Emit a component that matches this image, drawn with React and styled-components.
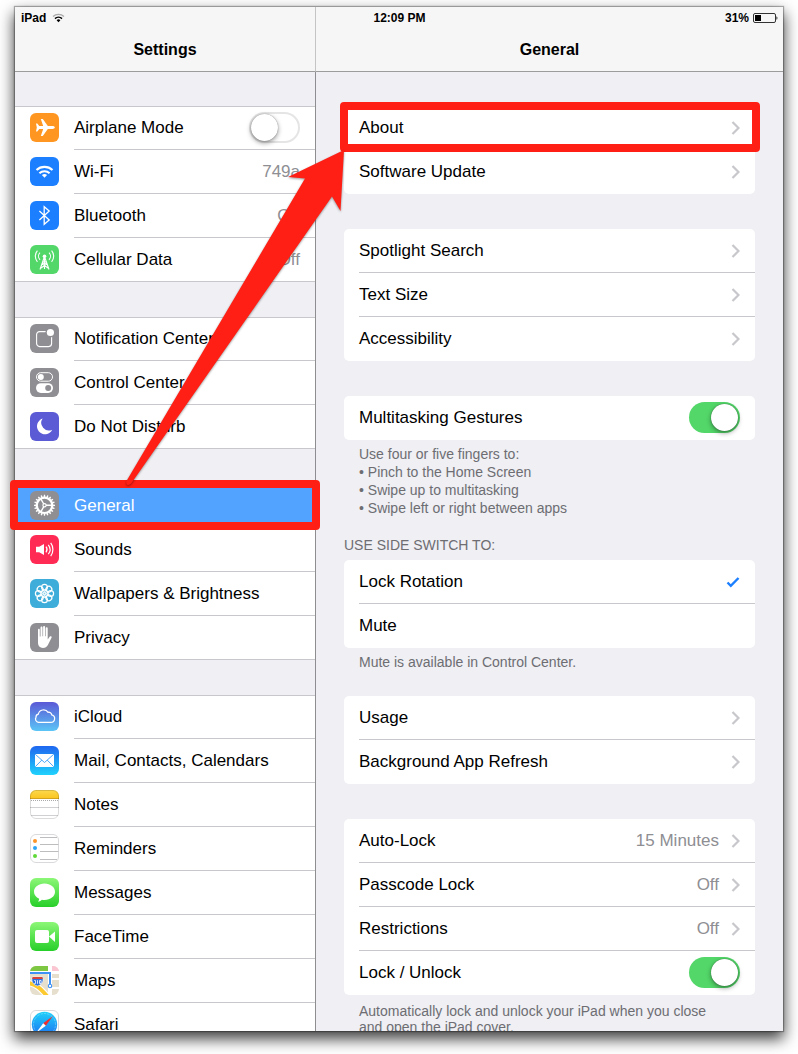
import React, { useState } from 'react';
import styled, { createGlobalStyle } from 'styled-components';

const GlobalStyle = createGlobalStyle`
  * {
    box-sizing: border-box;
  }
  body {
    margin: 0;
    background: #fff;
    font-family: 'Liberation Sans', Arial, sans-serif;
    font-size: 17px;
    color: #000;
  }
`;

const Page = styled.div`
  position: relative;
  height: 100vh;
  padding: 7px 15px 23px;
  overflow: hidden;
`;

const Window = styled.div`
  display: grid;
  grid-template-columns: 301px 1fr;
  grid-template-rows: 65px minmax(0, 1fr);
  height: 100%;
  background: #efeff4;
  box-shadow: 0 0 1px 1px rgba(0, 0, 0, 0.3), 0 7px 14px 1px rgba(0, 0, 0, 0.75);
`;

const StatusBar = styled.div`
  grid-area: 1 / 1 / 2 / 3;
  z-index: 1;
  display: grid;
  grid-template-columns: 1fr auto 1fr;
  align-items: center;
  height: 22px;
  padding: 0 5px 0 6px;
  font-size: 12px;
  font-weight: 700;
`;

const StatusSide = styled.div`
  display: flex;
  align-items: center;
  justify-content: ${(props) => (props.$end ? 'flex-end' : 'flex-start')};
  gap: ${(props) => (props.$end ? '4px' : '6px')};
`;

const NavBar = styled.header`
  grid-row: 1;
  grid-column: ${(props) => props.$column};
  display: flex;
  justify-content: center;
  padding-top: 33px;
  background: #f6f6f6;
  border-bottom: 1px solid #9c9c9c;
  border-right: ${(props) => (props.$divider ? '1px solid #c4c4c6' : 'none')};
`;

const Title = styled.h1`
  margin: 0;
  font-size: 16px;
  line-height: 20px;
  font-weight: 700;
`;

const Sidebar = styled.nav`
  padding-top: 34px;
  overflow: hidden;
  border-right: 1px solid #8e8e91;
`;

const Detail = styled.main`
  padding: 34px 28px 0;
  overflow: hidden;
`;

const SideGroup = styled.div`
  margin-bottom: 35px;
  background: #fff;
  box-shadow: inset 0 1px #c8c7cc, inset 0 -1px #c8c7cc;
`;

const SideRow = styled.a`
  display: flex;
  height: 44px;
  padding-left: 15px;
  gap: 15px;
  color: ${(props) => (props.$selected ? '#fff' : '#000')};
  background: ${(props) => (props.$selected ? '#52a2ff' : 'transparent')};
  text-decoration: none;

  > svg {
    flex: none;
    margin-top: 7px;
  }
`;

const RowBody = styled.span`
  flex: 1;
  display: flex;
  align-items: center;
  justify-content: space-between;
  padding-right: 15px;
  border-bottom: 1px solid #c8c7cc;

  ${SideRow}:last-child & {
    border-bottom-color: transparent;
  }
`;

const Value = styled.span`
  color: #8e8e93;
`;

const Group = styled.div`
  background: #fff;
  border-radius: 5px;
`;

const Section = styled.section`
  margin-bottom: ${(props) => (props.$noted ? '25px' : '35px')};
`;

const SectionHeader = styled.h2`
  margin: -6px 0 6px;
  font-size: 14px;
  line-height: 18px;
  font-weight: 400;
  color: #6d6d72;
`;

const Footnote = styled.p`
  margin: 0;
  padding: ${(props) => (props.$tight ? '8px' : '5px')} 28px 0 15px;
  font-size: 14px;
  line-height: ${(props) => (props.$tight ? '16px' : '18px')};
  white-space: pre-line;
  color: #6d6d72;
`;

const Row = styled.button`
  display: flex;
  width: 100%;
  height: 44px;
  padding: 0 0 0 15px;
  border: none;
  background: none;
  font: inherit;
  color: inherit;
  text-align: left;
`;

const RowInner = styled.span`
  flex: 1;
  display: flex;
  align-items: center;
  gap: 12px;
  height: 44px;
  padding-right: 15px;
  border-bottom: 1px solid #c8c7cc;

  ${Row}:last-child & {
    border-bottom-color: transparent;
  }
`;

const RowLabel = styled.span`
  flex: 1;
`;

const Switch = styled.input`
  appearance: none;
  flex: none;
  display: flex;
  width: 51px;
  height: 31px;
  margin: 0;
  padding: 2px;
  border-radius: 16px;
  background: #fff;
  box-shadow: inset 0 0 0 2px #e5e5e5;

  &::before {
    content: '';
    width: 27px;
    height: 27px;
    border-radius: 50%;
    background: #fff;
    box-shadow: 0 0 1px rgba(0, 0, 0, 0.5), 0 2px 5px rgba(0, 0, 0, 0.4);
  }

  &:checked {
    justify-content: flex-end;
    background: #53d769;
    box-shadow: none;
  }
`;

const Radio = styled.input`
  appearance: none;
  width: 0;
  height: 0;
  margin: 0;
`;

const Highlight = styled.div`
  position: absolute;
  top: ${(props) => props.$top};
  left: ${(props) => props.$left};
  right: ${(props) => props.$right};
  width: ${(props) => props.$width};
  height: 50px;
  border: 8px solid #ff1f14;
  border-radius: 4px;
  pointer-events: none;
`;

const Arrow = styled.svg`
  position: absolute;
  top: 0;
  left: 0;
  pointer-events: none;
  filter: drop-shadow(0 1px 1px rgba(0, 0, 0, 0.4));
`;

function Tile({ fill, children }) {
  return (
    <svg width="29" height="29" viewBox="0 0 29 29" fill="none" aria-hidden="true">
      <rect width="29" height="29" rx="6" fill={fill} />
      {children}
    </svg>
  );
}

function Gradient({ id, from, to }) {
  return (
    <linearGradient id={id} x1="0" y1="0" x2="0" y2="1">
      <stop offset="0" stopColor={from} />
      <stop offset="1" stopColor={to} />
    </linearGradient>
  );
}

const around = (count) => Array.from({ length: count }, (_, i) => (i * 360) / count);

const icons = {
  airplane: (
    <Tile fill="#ff9622">
      <path
        d="M24.8 14.5c0 .8-1.2 1.4-2.400 1.400h-4.600l-5 7h-2l2.400-7H9.300l-2 2.500H6l.8-3.900L6 10.600h1.300l2 2.500h3.900l-2.400-7h2l5 7h4.600c1.200 0 2.400.6 2.400 1.400z"
        fill="#fff"
      />
    </Tile>
  ),
  wifi: (
    <Tile fill="#1b7fff">
      <path d="M6.5 13.1a11.6 11.6 0 0 1 16 0" stroke="#fff" strokeWidth="2.1" />
      <path d="M9.4 16.2a7.4 7.4 0 0 1 10.2 0" stroke="#fff" strokeWidth="2" />
      <path d="M11.9 18.1a3.8 3.8 0 0 1 5.2 0l-2.6 2.6z" fill="#fff" />
    </Tile>
  ),
  bluetooth: (
    <Tile fill="#1b7fff">
      <path d="M9.4 10l9.8 9-5 4.3V5.7l5 4.3-9.8 9" stroke="#fff" strokeWidth="1.3" />
    </Tile>
  ),
  cellular: (
    <Tile fill="#53d769">
      <g stroke="#fff" strokeWidth="1.1">
        <path d="M7.4 5.6a8.6 8.6 0 0 0 0 11.2M10 7.6a5.2 5.2 0 0 0 0 7.2M19 7.6a5.2 5.2 0 0 1 0 7.2M21.6 5.6a8.6 8.6 0 0 1 0 11.2" />
        <path d="M14.5 11.5L10 24.5M14.5 11.5l4.5 13M14.5 13v11M12.8 16.5l4 2.5-5.8 4M16.2 16.5l-4 2.5 5.8 4" />
      </g>
      <circle cx="14.5" cy="11.2" r="1.8" fill="#fff" />
    </Tile>
  ),
  notification: (
    <Tile fill="#8e8e93">
      <rect x="6.6" y="7.6" width="15" height="15" rx="3" stroke="#fff" strokeWidth="1.1" />
      <circle cx="20.4" cy="8.5" r="5" fill="#8e8e93" />
      <circle cx="20.4" cy="8.5" r="3.6" fill="#fff" />
    </Tile>
  ),
  control: (
    <Tile fill="#8e8e93">
      <rect x="6.5" y="4.7" width="16" height="8.5" rx="4.2" stroke="#fff" strokeWidth="1" />
      <circle cx="10.8" cy="9" r="3" fill="#fff" />
      <rect x="6" y="15.2" width="17" height="9.7" rx="4.8" fill="#fff" />
      <circle cx="18.2" cy="20" r="3" fill="#8e8e93" />
    </Tile>
  ),
  moon: (
    <Tile fill="#5a5bd5">
      <path d="M12.6 6.6a8 8 0 1 0 9.6 11.1A7.6 7.6 0 0 1 12.6 6.6z" fill="#fff" />
    </Tile>
  ),
  gear: (
    <Tile fill="#8e8e93">
      <circle cx="14.5" cy="14.3" r="7.7" stroke="#fff" strokeWidth="2.200" />
      {around(20).map((a) => (
        <path key={a} d="M13.6 6l.3-2.200h1.200l.3 2.200z" fill="#fff" transform={`rotate(${a} 14.5 14.3)`} />
      ))}
      <circle cx="14.5" cy="14.3" r="1.6" stroke="#fff" strokeWidth="1.200" />
      <path d="M16 14.3h6M13.8 13l-3-5.2M13.8 15.6l-3 5.2" stroke="#fff" strokeWidth="1.400" />
    </Tile>
  ),
  sounds: (
    <Tile fill="#ff2b55">
      <path d="M6 11.8h3.2L14 8.900v11.200l-4.800-2.900H6z" fill="#fff" />
      <path
        d="M16 11.7a4.6 4.6 0 0 1 0 5.6M18.300 9.800a7.600 7.600 0 0 1 0 9.400M20.700 7.900a11 11 0 0 1 0 13.200"
        stroke="#fff"
        strokeWidth="1.200"
      />
    </Tile>
  ),
  wallpaper: (
    <Tile fill="#3fadd9">
      <g stroke="#fff" strokeWidth="1.200">
        {around(8).map((a) => (
          <g key={a} transform={`rotate(${a} 14.5 14.5)`}>
            <circle cx="14.5" cy="8.300" r="2.900" />
            <circle cx="14.5" cy="12.100" r="1.600" strokeWidth=".7" />
          </g>
        ))}
      </g>
    </Tile>
  ),
  privacy: (
    <Tile fill="#8e8e93">
      <path
        d="M8 19.5V6.800c0-1.500 1.800-1.500 1.800 0v6.700h.7V4.800c0-1.600 2-1.600 2 0v8.400h.6V4.100c0-1.600 2-1.600 2 0v9.100h.6V5.500c0-1.600 2-1.600 2 0v10.900l2.100-2.800c.9-1 2.400-.3 1.700 1.100l-3.600 7.400c-1.100 2-2.700 2.800-4.900 2.800-3.100 0-5-2-5-5.400z"
        fill="#fff"
      />
    </Tile>
  ),
  icloud: (
    <Tile fill="url(#cloudFill)">
      <Gradient id="cloudFill" from="#5a58d6" to="#5bc5f6" />
      <path
        d="M8.500 20.300h12.300a3.800 3.800 0 0 0 .9-7.500 3 3 0 0 0-3.600-2.500 5.400 5.400 0 0 0-9.800 1.900 3 3 0 0 0-2.300 3.200 3.200 3.200 0 0 0 2.500 4.900z"
        stroke="#fff"
        strokeWidth="1.200"
      />
    </Tile>
  ),
  mail: (
    <Tile fill="url(#mailFill)">
      <Gradient id="mailFill" from="#1f66f0" to="#1fd2fc" />
      <rect x="5" y="8" width="19" height="13" rx="1" fill="#fff" />
      <path d="M5.300 8.300l9.200 8.200 9.200-8.200M5.300 20.700l6.500-6.600M23.700 20.700l-6.500-6.600" stroke="#3a9df7" strokeWidth=".9" />
    </Tile>
  ),
  notes: (
    <Tile fill="#fff">
      <Gradient id="notesFill" from="#fcd84e" to="#fbc51f" />
      <path d="M0 8.500V6a6 6 0 0 1 6-6h17a6 6 0 0 1 6 6v2.500z" fill="url(#notesFill)" />
      <path d="M0 8.500h29" stroke="#d4a21c" />
      <path d="M1 10.500h27" stroke="#aaa" strokeDasharray="1 1" />
      <path d="M0 17.500h29M1 25.500h27" stroke="#d0d0d2" />
      <rect x=".5" y=".5" width="28" height="28" rx="5.500" stroke="#000" strokeOpacity=".14" />
    </Tile>
  ),
  reminders: (
    <Tile fill="#fff">
      <rect x=".5" y=".5" width="28" height="28" rx="5.500" stroke="#d9d9db" />
      <path d="M10 3.500h17M10 10.500h18.500M10 17.500h18.500M10 25.500h17" stroke="#bdbdbf" />
      <circle cx="5" cy="7" r="2" fill="#fc9427" />
      <circle cx="5" cy="14" r="2" fill="#2ea5f7" />
      <circle cx="5" cy="22" r="2" fill="#5fd938" />
    </Tile>
  ),
  messages: (
    <Tile fill="url(#greenFill)">
      <Gradient id="greenFill" from="#8cf777" to="#27cf2a" />
      <path
        d="M14.500 5.500c5.900 0 10.500 3.600 10.500 8.300s-4.600 8.200-10.500 8.200c-1 0-1.900-.1-2.700-.3-.9 1-2.300 1.700-3.800 1.900.8-.8 1.200-1.700 1.200-2.800C6 19.300 4 16.800 4 13.800c0-4.700 4.600-8.300 10.500-8.300z"
        fill="#fff"
      />
    </Tile>
  ),
  facetime: (
    <Tile fill="url(#videoFill)">
      <Gradient id="videoFill" from="#8cf777" to="#27cf2a" />
      <rect x="5" y="8" width="14" height="13" rx="2" fill="#fff" />
      <path d="M19 14.500l6-5v10.500z" fill="#fff" />
    </Tile>
  ),
  maps: (
    <svg width="29" height="29" viewBox="0 0 29 29" fill="none" aria-hidden="true">
      <clipPath id="mapClip">
        <rect width="29" height="29" rx="6" />
      </clipPath>
      <g clipPath="url(#mapClip)">
        <rect width="29" height="29" fill="#e6dfcd" />
        <path d="M0 0h18v5H0z" fill="#7dc742" />
        <path d="M22 0h7v5h-7z" fill="#fbc6d2" />
        <path d="M0 5h18v3H0zM18 0h4v29h-4zM22 5h7v3h-7zM22 12h7v2h-7zM22 21h7v2h-7z" fill="#fff" />
        <path d="M-2 17c8 1 13 6 19 13" stroke="#fff" strokeWidth="6" />
        <path d="M-2 17c8 1 13 6 19 13" stroke="#fcc92f" strokeWidth="4" />
        <path d="M0 7h20v12" stroke="#3f92f5" strokeWidth="2" />
        <circle cx="20" cy="20" r="1.700" fill="#fff" stroke="#3f92f5" strokeWidth="1.100" />
        <path d="M2.500 11h10c1 3 1 7-5 9-6-2-6-6-5-9z" fill="#2c73e0" stroke="#fff" strokeWidth=".5" />
        <path d="M2.200 13l.5-2h9.600l.5 2z" fill="#d9413b" />
        <path d="M4.200 14.500h1.300v3H4.200M7.500 14.200v3.600M9.500 14.500h1.600v3H9.500z" stroke="#fff" strokeWidth=".8" />
      </g>
    </svg>
  ),
  safari: (
    <Tile fill="#fff">
      <Gradient id="safariFill" from="#1fd0fa" to="#1d6ff1" />
      <rect x=".5" y=".5" width="28" height="28" rx="5.500" stroke="#d9d9db" />
      <circle cx="14.500" cy="14.500" r="12.700" fill="url(#safariFill)" />
      <circle cx="14.500" cy="14.500" r="11" stroke="#fff" strokeOpacity=".6" strokeDasharray=".5 1" />
      <path d="M23 6l-7.200 9.800-2.600-2.600z" fill="#f22d2d" />
      <path d="M6 23l7.200-9.800 2.600 2.600z" fill="#fff" />
    </Tile>
  ),
};

const Chevron = () => (
  <svg width="9" height="14" viewBox="0 0 9 14" fill="none" aria-hidden="true">
    <path d="M1.500 1l6 6-6 6" stroke="#c7c7cc" strokeWidth="2.200" />
  </svg>
);

const Check = () => (
  <svg width="14" height="12" viewBox="0 0 14 12" fill="none" aria-hidden="true">
    <path d="M1.500 6.500l3.300 3.300L12.500 2" stroke="#1b7fff" strokeWidth="2.400" />
  </svg>
);

const sideGroups = [
  [
    { icon: 'airplane', label: 'Airplane Mode', toggle: true },
    { icon: 'wifi', label: 'Wi-Fi', value: '749a' },
    { icon: 'bluetooth', label: 'Bluetooth', value: 'On' },
    { icon: 'cellular', label: 'Cellular Data', value: 'Off' },
  ],
  [
    { icon: 'notification', label: 'Notification Center' },
    { icon: 'control', label: 'Control Center' },
    { icon: 'moon', label: 'Do Not Disturb' },
  ],
  [
    { icon: 'gear', label: 'General', selected: true },
    { icon: 'sounds', label: 'Sounds' },
    { icon: 'wallpaper', label: 'Wallpapers & Brightness' },
    { icon: 'privacy', label: 'Privacy' },
  ],
  [
    { icon: 'icloud', label: 'iCloud' },
    { icon: 'mail', label: 'Mail, Contacts, Calendars' },
    { icon: 'notes', label: 'Notes' },
    { icon: 'reminders', label: 'Reminders' },
    { icon: 'messages', label: 'Messages' },
    { icon: 'facetime', label: 'FaceTime' },
    { icon: 'maps', label: 'Maps' },
    { icon: 'safari', label: 'Safari' },
  ],
];

function SideItem({ item }) {
  const [on, setOn] = useState(false);
  const link = item.toggle ? { as: 'label' } : { href: '#' };
  return (
    <SideRow {...link} $selected={item.selected}>
      {icons[item.icon]}
      <RowBody>
        {item.label}
        {item.value && <Value>{item.value}</Value>}
        {item.toggle && <Switch type="checkbox" checked={on} onChange={() => setOn(!on)} />}
      </RowBody>
    </SideRow>
  );
}

function LinkRow({ label, value }) {
  return (
    <Row type="button">
      <RowInner>
        <RowLabel>{label}</RowLabel>
        {value && <Value>{value}</Value>}
        <Chevron />
      </RowInner>
    </Row>
  );
}

function SwitchRow({ label }) {
  const [on, setOn] = useState(true);
  return (
    <Row as="label">
      <RowInner>
        <RowLabel>{label}</RowLabel>
        <Switch type="checkbox" checked={on} onChange={() => setOn(!on)} />
      </RowInner>
    </Row>
  );
}

function App() {
  const [sideSwitch, setSideSwitch] = useState('Lock Rotation');

  return (
    <Page>
      <GlobalStyle />
      <Window>
        <NavBar $column={1} $divider>
          <Title>Settings</Title>
        </NavBar>
        <NavBar $column={2}>
          <Title as="h2">General</Title>
        </NavBar>
        <StatusBar>
          <StatusSide>
            iPad
            <svg width="13" height="10" viewBox="0 0 13 10" fill="none" aria-hidden="true">
              <path d="M1 3.500a8 8 0 0 1 11 0" stroke="#aaa" strokeWidth="1.300" />
              <path d="M3 5.600a5 5 0 0 1 7 0" stroke="#000" strokeWidth="1.500" />
              <path d="M4.600 7.200a2.700 2.700 0 0 1 3.800 0L6.500 9.200z" fill="#000" />
            </svg>
          </StatusSide>
          <span>12:09 PM</span>
          <StatusSide $end>
            31%
            <svg width="25" height="10" viewBox="0 0 25 10" fill="none" aria-hidden="true">
              <rect x=".5" y=".5" width="22" height="9" rx="1.500" stroke="#333" />
              <rect x="2" y="2" width="6" height="6" fill="#000" />
              <path d="M23.500 3.200c1.200.4 1.200 3.200 0 3.600z" fill="#000" />
            </svg>
          </StatusSide>
        </StatusBar>

        <Sidebar>
          {sideGroups.map((group) => (
            <SideGroup key={group[0].label}>
              {group.map((item) => (
                <SideItem key={item.label} item={item} />
              ))}
            </SideGroup>
          ))}
        </Sidebar>

        <Detail>
          <Section>
            <Group>
              <LinkRow label="About" />
              <LinkRow label="Software Update" />
            </Group>
          </Section>

          <Section>
            <Group>
              <LinkRow label="Spotlight Search" />
              <LinkRow label="Text Size" />
              <LinkRow label="Accessibility" />
            </Group>
          </Section>

          <Section $noted>
            <Group>
              <SwitchRow label="Multitasking Gestures" />
            </Group>
            <Footnote>
              {'Use four or five fingers to:\n• Pinch to the Home Screen\n• Swipe up to multitasking\n• Swipe left or right between apps'}
            </Footnote>
          </Section>

          <Section $noted>
            <SectionHeader>USE SIDE SWITCH TO:</SectionHeader>
            <Group>
              {['Lock Rotation', 'Mute'].map((option) => (
                <Row as="label" key={option}>
                  <RowInner>
                    <RowLabel>{option}</RowLabel>
                    <Radio
                      type="radio"
                      name="sideSwitch"
                      checked={sideSwitch === option}
                      onChange={() => setSideSwitch(option)}
                    />
                    {sideSwitch === option && <Check />}
                  </RowInner>
                </Row>
              ))}
            </Group>
            <Footnote>Mute is available in Control Center.</Footnote>
          </Section>

          <Section>
            <Group>
              <LinkRow label="Usage" />
              <LinkRow label="Background App Refresh" />
            </Group>
          </Section>

          <Section $noted>
            <Group>
              <LinkRow label="Auto-Lock" value="15 Minutes" />
              <LinkRow label="Passcode Lock" value="Off" />
              <LinkRow label="Restrictions" value="Off" />
              <SwitchRow label="Lock / Unlock" />
            </Group>
            <Footnote $tight>
              Automatically lock and unlock your iPad when you close and open the iPad cover.
            </Footnote>
          </Section>
        </Detail>
      </Window>

      <Highlight $top="102px" $left="340px" $right="38px" />
      <Highlight $top="480px" $left="10px" $width="310px" />
      <Arrow width="360" height="500" viewBox="0 0 360 500" aria-hidden="true">
        <path
          d="M344 150L288 177l17 1.500L126.500 481q-1 3 1 4 2 .5 4-2L332 196.500l8.500 14.500z"
          fill="#ff1f14"
        />
      </Arrow>
    </Page>
  );
}

export default App;
